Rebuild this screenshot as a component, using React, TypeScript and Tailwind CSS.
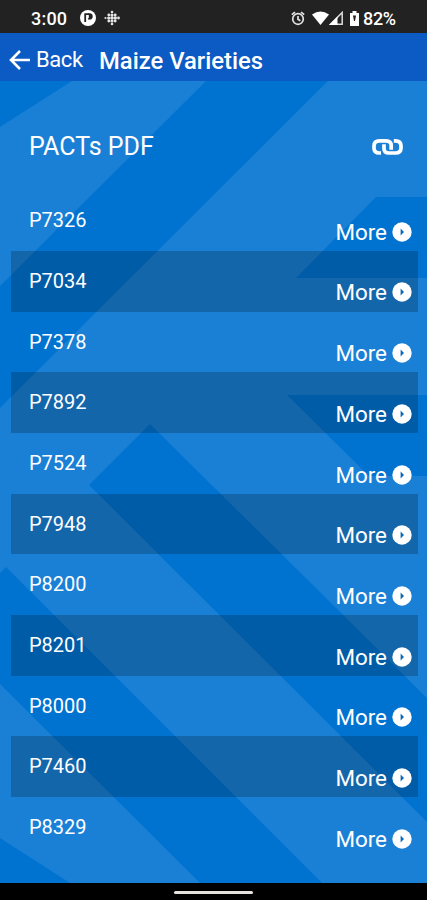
const varieties = [
    'P7326', 'P7034', 'P7378', 'P7892', 'P7524', 'P7948',
    'P8200', 'P8201', 'P8000', 'P7460', 'P8329',
];

const StatusBar = () => (
    <div className="flex h-[33px] shrink-0 items-center justify-between bg-[#222222] pl-[31px] pr-[30px] pt-[3px] font-medium text-white">
        <div className="flex items-center">
            <span className="w-[38px] text-[18px] tracking-[0.2px]">3:00</span>
            <svg className="ml-[11px] h-4 w-4" viewBox="0 0 16 16">
                <circle cx="8" cy="8" r="8" fill="#fff" />
                <path d="M5.2 12V4.2h3.6" fill="none" stroke="#222" strokeWidth="1.8" />
                <path d="M8 3.3h1.6a3.1 3.1 0 0 1 0 6.2H8Z" fill="#222" />
                <path d="M8.3 5v3.2" fill="none" stroke="#fff" strokeWidth="1" />
            </svg>
            <svg className="ml-2 h-4 w-4" viewBox="0 0 16 16" fill="#e6e6e6">
                <circle cx="8" cy="2" r="1.3" />
                <circle cx="4.8" cy="5" r="1.4" />
                <circle cx="8" cy="5" r="1.6" />
                <circle cx="11.2" cy="5" r="1.4" />
                <circle cx="1.5" cy="8" r="1.1" />
                <circle cx="4.7" cy="8" r="1.6" />
                <circle cx="8" cy="8" r="1.8" />
                <circle cx="11.3" cy="8" r="1.7" />
                <circle cx="14.5" cy="8" r="1.4" />
                <circle cx="4.8" cy="11" r="1.4" />
                <circle cx="8" cy="11" r="1.6" />
                <circle cx="11.2" cy="11" r="1.4" />
                <circle cx="8" cy="14" r="1.3" />
            </svg>
        </div>
        <div className="flex items-center">
            {/* Alarm */}
            <svg className="h-[15px] w-[14px]" viewBox="0 0 14 15" fill="none" stroke="#e4e4e4" strokeWidth="1.7">
                <circle cx="7" cy="8" r="5.3" />
                <path d="M.8 3.7 4 1.2M13.2 3.7 10 1.2M7 5v3.3l2.3 1.5" />
            </svg>
            {/* Wifi */}
            <svg className="ml-[7px] h-[14px] w-[17px]" viewBox="0 0 17 14" fill="#fff">
                <path d="M0 3.5Q8.5-2.7 17 3.5L8.5 14Z" />
            </svg>
            {/* Signal */}
            <svg className="h-[14px] w-[14px]" viewBox="0 0 14 14">
                <path d="M1.5 13.2H13.2V1.5Z" fill="none" stroke="#ddd" strokeWidth="1.5" />
                <path d="M0 14 8.5 5.5V14Z" fill="#fff" />
            </svg>
            {/* Battery */}
            <svg className="ml-[7px] h-[15px] w-[9px]" viewBox="0 0 9 15">
                <path d="M0 2h2.5V0h4v2H9v13H0Z" fill="#fff" />
                <path d="M3 4.5h3L5 10H4Z" fill="#222" />
            </svg>
            <span className="ml-[4px] w-[34px] text-[18px] tracking-[-0.3px]">82%</span>
        </div>
    </div>
);

const Backdrop = () => (
    <svg className="absolute inset-0 h-full w-full" viewBox="0 81 427 802" preserveAspectRatio="none" fill="#0073d1">
        <path d="M0 81H72L0 127Z" />
        <path d="M206 81H328L0 408V286Z" />
        <path d="M376 197H427V278H296Z" />
        <path d="M287 395H427V476H369Z" />
        <path d="M150 424 427 698V822L89 485Z" />
        <path d="M6 567 322 883H200L0 684V573Z" />
        <path d="M0 838 70 883H0Z" />
    </svg>
);

const LinkIcon = () => (
    <svg className="h-[18px] w-[31px]" viewBox="0 0 31 18" fill="none" stroke="#fff" strokeWidth="3.7">
        <path d="M9 15H7.5Q2 15 2 10V8Q2 2.8 7.5 2.8H14Q19.2 2.8 19.2 7.5V11.8" />
        <path d="M21.8 2.8H23.5Q29 2.8 29 8V10Q29 15 23.5 15H17Q12 15 12 10.5V6.3" />
    </svg>
);

const MoreLink = () => (
    <a href="#" className="flex items-center gap-[5px] text-[22.4px] leading-[26px]">
        More
        <svg className="h-5 w-5" viewBox="0 0 20 20">
            <circle cx="10" cy="10" r="9.7" fill="#fff" />
            <path d="M8.6 6.6 12 10 8.6 13.4Z" fill="#0968b8" />
        </svg>
    </a>
);

export default function App() {
    return (
        <div className="flex h-[900px] w-[427px] flex-col overflow-hidden bg-black font-['Roboto',sans-serif] text-white">
            <StatusBar />

            <header className="flex h-12 shrink-0 items-center bg-[#0c5ac3] pl-[9px] pt-[6px]">
                <svg className="h-5 w-[21px]" viewBox="0 0 21 20" fill="none" stroke="#fff" strokeWidth="2.6">
                    <path d="M21 10H2M11 1 2 10l9 9" />
                </svg>
                <a href="#" className="mb-[2px] ml-[6px] w-[63px] text-[22px] tracking-[-0.4px]">Back</a>
                <h1 className="mt-[4px] text-[23.8px] font-medium">Maize Varieties</h1>
            </header>

            <main className="relative h-[802px] shrink-0 bg-[#1a80d6]">
                <Backdrop />
                <div className="relative">
                    <div className="flex h-[109.3px] items-center justify-between pl-[29px] pr-[24px] pt-[22px]">
                        <h2 className="text-[25px]">PACTs PDF</h2>
                        <LinkIcon />
                    </div>
                    <ul className="ml-[10.5px] mr-[9px]">
                        {varieties.map((name, i) => (
                            <li
                                key={name}
                                className={`flex h-[60.7px] items-start justify-between pl-[18.5px] pr-[6px] ${i % 2 ? 'bg-black/20' : ''}`}
                            >
                                <span className="pt-[18px] text-[20px] leading-6">{name}</span>
                                <div className="pt-[28.5px]">
                                    <MoreLink />
                                </div>
                            </li>
                        ))}
                    </ul>
                </div>
            </main>

            <div className="flex flex-1 items-center justify-center">
                <div className="mt-[2px] h-[3px] w-[79px] rounded-full bg-[#e6e3df]"></div>
            </div>
        </div>
    );
}
